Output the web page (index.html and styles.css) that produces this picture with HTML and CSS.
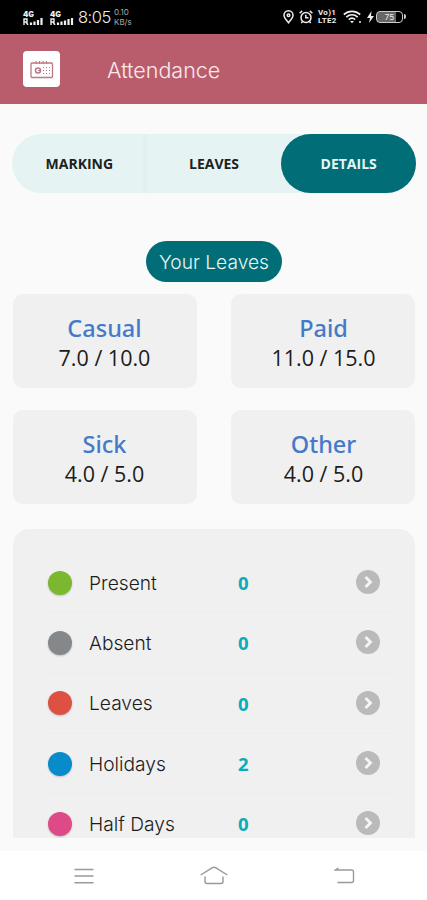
FILE: index.html
```html
<!DOCTYPE html>
<html lang="en">

<head>
    <meta charset="UTF-8">
    <meta name="viewport" content="width=device-width, initial-scale=1">
    <title>Attendance</title>
    <link rel="stylesheet" href="styles.css">
</head>

<body>
    <div class="screen">
        <div class="status-bar">
            <div class="signal">
                <span>4G</span>
                <svg width="20" height="7" viewBox="0 0 20 7" fill="none" stroke="#eee">
                    <path d="M1 7V1h3v3H1M3 4l2 3" stroke-width="1.4" />
                    <path d="M8 7V4.500M11.500 7V3.500M15 7V2M18.500 7V0" stroke-width="2.200" />
                </svg>
            </div>
            <div class="signal">
                <span>4G</span>
                <svg width="24" height="7" viewBox="0 0 24 7" fill="none" stroke="#eee">
                    <path d="M1 7V1h3v3H1M3 4l2 3" stroke-width="1.4" />
                    <path d="M8 7V4.500M11.500 7V3.500M15 7V2.500M18.500 7V1M22 7V0" stroke-width="2.200" />
                </svg>
            </div>
            <span class="time">8:05</span>
            <div class="speed"><span>0.10</span><span>KB/s</span></div>

            <div class="status-right">
                <svg class="pin" width="11" height="14" viewBox="0 0 11 14" fill="none" stroke="#eee" stroke-width="1.5">
                    <path d="M5.500 12.700C3 9.600 1 7.800 1 5.300a4.500 4.500 0 0 1 9 0c0 2.500-2 4.300-4.500 7.400z" />
                    <circle cx="5.500" cy="5.300" r="1.300" />
                </svg>
                <svg class="alarm" width="14" height="14" viewBox="0 0 14 14" fill="none" stroke="#eee" stroke-width="1.500">
                    <circle cx="7" cy="7.500" r="5" />
                    <path d="M6.800 4.800v3h2.700M.6 3.200L3.200.9M13.400 3.200L10.800.9M3.500 11.500L2.300 13M10.500 11.500l1.200 1.500" />
                </svg>
                <div class="volte"><span>Vo)1</span><span>LTE2</span></div>
                <svg class="wifi" width="19" height="14" viewBox="0 0 19 14" fill="none" stroke="#eee" stroke-width="1.700">
                    <path d="M.8 4.500c4.700-4.200 11.700-4.200 16.400 0M3.300 7.200c3.400-3 8-3 11.400 0M5.800 9.600c2-1.700 4.400-1.700 6.400 0" />
                    <path d="M7 11l2 2.300L11 11z" fill="#eee" stroke="none" />
                    <path d="M16 12h2" />
                </svg>
                <svg class="bolt" width="7" height="12" viewBox="0 0 7 12" fill="#eee">
                    <path d="M4.500 0L0 7h3l-1 5 5-7H4z" />
                </svg>
                <div class="battery"><span>75</span></div>
            </div>
        </div>

        <div class="header">
            <div class="logo">
                <svg width="24" height="19" viewBox="0 0 24 19" fill="none" stroke="#bd7883">
                    <rect x="1" y="3" width="21.500" height="14.500" rx="1" stroke-width="1.300" />
                    <path d="M6 1v3M9.500 1v3M13 1v3M16.500 1v3" />
                    <circle cx="8" cy="10.500" r="2.500" stroke-width="1.500" />
                    <path d="M8 10.500h2" />
                    <path d="M13 7.500h8M13 10.500h8M13 13.500h8" stroke-dasharray="1 2" />
                </svg>
            </div>
            <h1>Attendance</h1>
        </div>

        <div class="content">
            <div class="tabs">
                <button class="tab">MARKING</button>
                <button class="tab">LEAVES</button>
                <button class="tab active">DETAILS</button>
            </div>

            <h2 class="section-title">Your Leaves</h2>

            <div class="leave-grid">
                <div class="leave-card">
                    <div class="leave-name">Casual</div>
                    <div class="leave-count">7.0 / 10.0</div>
                </div>
                <div class="leave-card">
                    <div class="leave-name">Paid</div>
                    <div class="leave-count">11.0 / 15.0</div>
                </div>
                <div class="leave-card">
                    <div class="leave-name">Sick</div>
                    <div class="leave-count">4.0 / 5.0</div>
                </div>
                <div class="leave-card">
                    <div class="leave-name">Other</div>
                    <div class="leave-count">4.0 / 5.0</div>
                </div>
            </div>

            <div class="summary">
                <div class="row">
                    <span class="dot present"></span>
                    <span class="label">Present</span>
                    <span class="value">0</span>
                    <svg class="go" viewBox="0 0 24 24"><circle cx="12" cy="12" r="12" /><path d="M9.500 7l5 5-5 5" /></svg>
                </div>
                <div class="row">
                    <span class="dot absent"></span>
                    <span class="label">Absent</span>
                    <span class="value">0</span>
                    <svg class="go" viewBox="0 0 24 24"><circle cx="12" cy="12" r="12" /><path d="M9.500 7l5 5-5 5" /></svg>
                </div>
                <div class="row">
                    <span class="dot leaves"></span>
                    <span class="label">Leaves</span>
                    <span class="value">0</span>
                    <svg class="go" viewBox="0 0 24 24"><circle cx="12" cy="12" r="12" /><path d="M9.500 7l5 5-5 5" /></svg>
                </div>
                <div class="row">
                    <span class="dot holidays"></span>
                    <span class="label">Holidays</span>
                    <span class="value">2</span>
                    <svg class="go" viewBox="0 0 24 24"><circle cx="12" cy="12" r="12" /><path d="M9.500 7l5 5-5 5" /></svg>
                </div>
                <div class="row">
                    <span class="dot half-days"></span>
                    <span class="label">Half Days</span>
                    <span class="value">0</span>
                    <svg class="go" viewBox="0 0 24 24"><circle cx="12" cy="12" r="12" /><path d="M9.500 7l5 5-5 5" /></svg>
                </div>
            </div>
        </div>

        <div class="nav-bar">
            <svg width="20" height="16" viewBox="0 0 20 16">
                <path d="M.5 1.500h19M.5 8h19M.5 14.700h19" />
            </svg>
            <svg width="28" height="19" viewBox="0 0 28 19">
                <path d="M.7 9L12 1.900q2-1.200 4 0L27.300 9M5 10.500v5q0 2 2 2h14q2 0 2-2v-5" />
            </svg>
            <svg width="21" height="17" viewBox="0 0 21 17">
                <path d="M4.500 1L1.200 3H17.500q2 0 2 2v8.500q0 2-2 2H3.500" />
            </svg>
        </div>
    </div>
</body>

</html>
```

FILE: styles.css
```css
* {
    box-sizing: border-box;
}

body {
    margin: 0;
    font-family: 'Open Sans', 'Noto Sans', sans-serif;
    color: #1c1c1c;
    background: #fafafa;
}

.screen {
    height: 900px;
    display: flex;
    flex-direction: column;
    overflow: hidden;
}

/* status bar */
.status-bar {
    height: 34px;
    flex: none;
    background: #000;
    color: #eee;
    display: flex;
    align-items: center;
    padding: 0 22px 0 23px;
    font-family: Inter, sans-serif;
}

.signal {
    display: flex;
    flex-direction: column;
    margin-right: 7px;
    padding-top: 1px;
    font-size: 7.5px;
    font-weight: 900;
    line-height: 7px;
}

.signal + .signal {
    margin-right: 4px;
}

.time {
    width: 33px;
    font-size: 16.5px;
    font-weight: 300;
    letter-spacing: -0.5px;
}

.speed {
    display: flex;
    flex-direction: column;
    margin-left: 3px;
    font-size: 8px;
    line-height: 10px;
    color: #aaa;
}

.status-right {
    display: flex;
    align-items: center;
    margin-left: auto;
}

.alarm {
    margin-left: 5px;
}

.volte {
    display: flex;
    flex-direction: column;
    width: 21px;
    margin-left: 5px;
    font-family: Roboto, sans-serif;
    font-size: 8px;
    font-weight: 700;
    line-height: 8px;
    letter-spacing: 0.3px;
}

.wifi {
    margin-left: 4px;
}

.bolt {
    margin: 0 2px 0 5px;
}

.battery {
    position: relative;
    width: 27px;
    height: 12px;
    margin-right: 2px;
    border: 1.5px solid #ccc;
    border-radius: 4px;
    background: linear-gradient(90deg, #666 75%, #000 75%);
    font-size: 8px;
    line-height: 10px;
    text-align: center;
}

.battery::after {
    content: '';
    position: absolute;
    right: -4px;
    top: 2px;
    width: 2px;
    height: 5px;
    border-radius: 0 2px 2px 0;
    background: #ccc;
}

/* header */
.header {
    height: 70px;
    flex: none;
    display: flex;
    align-items: center;
    padding-left: 23px;
    background: #b95d6d;
}

.logo {
    width: 37px;
    height: 36px;
    display: flex;
    align-items: center;
    justify-content: center;
    border-radius: 4px;
    background: #fff;
}

.header h1 {
    margin: 1px 0 0 47px;
    font-family: Inter, sans-serif;
    font-size: 21.5px;
    font-weight: 300;
    color: #fbeaec;
}

/* content */
.content {
    flex: 1;
    min-height: 0;
    display: flex;
    flex-direction: column;
    padding: 30px 12px 13px 13px;
}

.tabs {
    flex: none;
    height: 59px;
    display: flex;
    margin: 0 -1px;
    border-radius: 30px;
    background: #e5f4f2;
}

.tab {
    flex: 1;
    padding: 0;
    border: none;
    background: none;
    font-family: 'Open Sans', sans-serif;
    font-size: 14px;
    font-weight: 700;
    color: #1c2222;
}

/* soft seam between the first two tabs */
.tab:first-child {
    background: linear-gradient(90deg, transparent 97%, #e1f1ef 97%);
}

.tab.active {
    border-radius: 30px;
    background: #006d77;
    color: #e8f6f6;
}

.section-title {
    flex: none;
    align-self: center;
    width: 136px;
    height: 41px;
    margin: 48px 0 12px;
    border-radius: 21px;
    background: #006d77;
    color: #e8f6f6;
    font-family: Inter, sans-serif;
    font-size: 19.2px;
    font-weight: 300;
    line-height: 42px;
    text-align: center;
}

.leave-grid {
    flex: none;
    display: grid;
    grid-template-columns: 1fr 1fr;
    gap: 22px 34px;
}

.leave-card {
    height: 94px;
    padding: 18px 1px 0 0;
    border-radius: 10px;
    background: #f0f0f0;
    text-align: center;
}

.leave-card:nth-child(even) {
    padding: 18px 0 0 1px;
}

.leave-name {
    font-family: 'Noto Sans', 'Open Sans', sans-serif;
    font-size: 23.5px;
    font-weight: 500;
    line-height: 32px;
    color: #457ac9;
}

.leave-count {
    font-size: 21.5px;
    line-height: 28px;
}

.summary {
    flex: 1;
    min-height: 0;
    margin-top: 25px;
    padding: 24px 17px 0 35px;
    border-radius: 16px 16px 0 0;
    background: #f0f0f0;
    overflow: hidden;
}

.row {
    height: 60.3px;
    display: flex;
    align-items: center;
    border-bottom: 1px solid #ededed;
}

.dot {
    width: 24px;
    height: 24px;
    border-radius: 50%;
    box-shadow: 0 1px 2px rgba(0, 0, 0, 0.2);
}

.present {
    background: #7cb82f;
}

.absent {
    background: #85888a;
}

.leaves {
    background: #de5142;
}

.holidays {
    background: #078bca;
}

.half-days {
    background: #dd4a87;
}

.label {
    width: 149px;
    margin-left: 17px;
    font-family: Inter, sans-serif;
    font-size: 19.2px;
    font-weight: 300;
}

.value {
    font-size: 18.5px;
    font-weight: 700;
    color: #0cabb8;
}

.go {
    width: 24px;
    height: 24px;
    margin: -1px 18px 0 auto;
    fill: #bababa;
}

.go path {
    fill: none;
    stroke: #f5f5f5;
    stroke-width: 2.8;
}

/* navigation bar */
.nav-bar {
    height: 49px;
    flex: none;
    display: flex;
    align-items: center;
    justify-content: space-between;
    padding: 0 72px 0 74px;
    background: #fff;
}

.nav-bar svg {
    fill: none;
    stroke: #999;
    stroke-width: 1.4;
}
```
